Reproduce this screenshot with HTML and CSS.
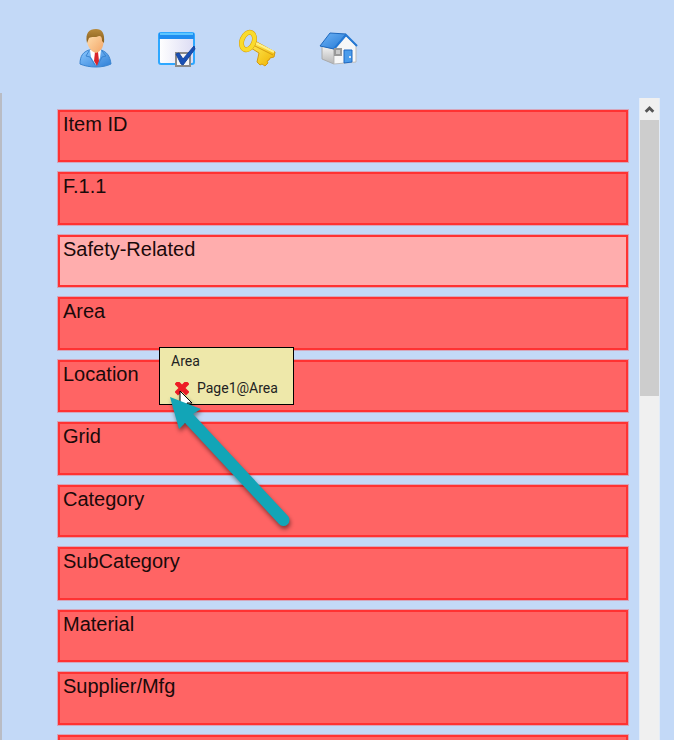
FILE: index.html
```html
<!DOCTYPE html>
<html lang="en">
<head>
    <meta charset="UTF-8">
    <meta name="viewport" content="width=device-width, initial-scale=1.0">
    <title>Fields</title>
    <link rel="stylesheet" href="styles.css">
</head>
<body>
    <header class="toolbar">
        <button type="button" aria-label="User">
            <svg viewBox="0 0 40 40">
                <defs>
                    <linearGradient id="suit" x2="1" y2="1"><stop stop-color="#8cc8ff"/><stop offset="1" stop-color="#2f7fd6"/></linearGradient>
                    <linearGradient id="skin" x2="1" y2="1"><stop stop-color="#ffe0b0"/><stop offset="1" stop-color="#f3a566"/></linearGradient>
                    <linearGradient id="hair" x2="0" y2="1"><stop stop-color="#b88a3c"/><stop offset="1" stop-color="#855c1c"/></linearGradient>
                </defs>
                <path d="M4 36c0-8 3-12 9-14h12c6 2 9 6 10 14-8 4-22 4-31 0z" fill="url(#suit)" stroke="#3a84d0"/>
                <path d="M14 22h11l-1 8-4 7-5-8z" fill="#fff"/>
                <path d="M19 24h3l1 9-2 5-3-5z" fill="#d9252b"/>
                <path d="M13 23l-3 5 4 1 5 8M26 23l4 5-4 1-4 8" fill="none" stroke="#3a84d0"/>
                <path d="M11 10c0-6 16-6 16 1 2 6-2 13-7 14-5-1-10-8-9-15z" fill="url(#skin)"/>
                <path d="M11 15C9 5 13 1 20 1c6 0 9 4 8 14l-2-2c0-4-1-5-3-5-4 2-7 0-10 2z" fill="url(#hair)"/>
            </svg>
        </button>
        <button type="button" aria-label="Tasks">
            <svg viewBox="0 0 40 40">
                <defs>
                    <linearGradient id="page" x2="1" y2="0"><stop stop-color="#fff"/><stop offset="1" stop-color="#dcdcf4"/></linearGradient>
                </defs>
                <rect x="2" y="5" width="35" height="31" rx="2" fill="url(#page)" stroke="#2ea8ff" stroke-width="2"/>
                <path d="M2 5h35v6H2z" fill="#1f8df0"/>
                <path d="M3 6h33" stroke="#5cc6ff" stroke-width="2"/>
                <rect x="19" y="25" width="14" height="13" fill="#f6f6f6" stroke="#8a8a8a" stroke-width="2"/>
                <path d="M19 26l3-1 4 6 11-13 1 3-12 16-2-1z" fill="#1950b4" stroke="#1646a0"/>
            </svg>
        </button>
        <button type="button" aria-label="Key">
            <svg viewBox="0 0 40 40">
                <defs>
                    <linearGradient id="gold" x2="1" y2="1"><stop stop-color="#ffee58"/><stop offset="1" stop-color="#efb000"/></linearGradient>
                </defs>
                <path d="M17 13l20 11-1 5-4 1-1 2-2 1 1 2-3 3-3-2-2 1-3-3 2-9-8-5z" fill="url(#gold)" stroke="#d39a10"/>
                <path d="M17 18l18 9" stroke="#d39a10"/>
                <path d="M18 15l18 9" stroke="#fff08a" stroke-width="2"/>
                <ellipse cx="10" cy="13" rx="6" ry="9" transform="rotate(22 10 13)" fill="none" stroke="#d39a10" stroke-width="5"/>
                <ellipse cx="10" cy="13" rx="6" ry="9" transform="rotate(22 10 13)" fill="none" stroke="#fadb2c" stroke-width="4"/>
            </svg>
        </button>
        <button type="button" aria-label="Home">
            <svg viewBox="0 0 40 40">
                <defs>
                    <linearGradient id="roof" x2="1" y2="1"><stop stop-color="#6fb4f6"/><stop offset="1" stop-color="#2478d4"/></linearGradient>
                    <linearGradient id="side" x2="0" y2="1"><stop stop-color="#f4f4f4"/><stop offset="1" stop-color="#b5b5b5"/></linearGradient>
                </defs>
                <path d="M3 18l12 3v15L3 31z" fill="url(#side)" stroke="#aaa"/>
                <path d="M15 20L27 8l10 10v16l-22 2z" fill="#f7f7f7" stroke="#bbb"/>
                <path d="M1 18L11 5l16 1-12 15z" fill="url(#roof)" stroke="#1e68bd"/>
                <path d="M15 21L27 7l11 11" fill="none" stroke="#2478d4" stroke-width="2"/>
                <rect x="16" y="21" width="6" height="6" fill="#c9c9c9" stroke="#999" stroke-width="2"/>
                <path d="M25 22h8v12l-8 1z" fill="#4a9cec" stroke="#1c67c0"/>
                <circle cx="31" cy="29" r="1" fill="#fff"/>
            </svg>
        </button>
    </header>
    <main>
        <ul class="fields">
            <li>Item ID</li>
            <li>F.1.1</li>
            <li class="light">Safety-Related</li>
            <li>Area</li>
            <li class="current">
                Location
                <div class="tooltip">
                    <p>Area</p>
                    <p class="error">
                        <svg viewBox="0 0 14 14"><path d="M3 2l8 8M11 2l-8 8" stroke="#ee1c25" stroke-width="5" stroke-linecap="square"/></svg>
                        Page1@Area
                    </p>
                </div>
                <svg class="pointer" viewBox="0 0 140 150">
                    <path d="M15 1v15l3-3 3 5h2l-1-5h5z" fill="#fff" stroke="#000"/>
                    <path d="M5 7l31 12-8 5 95 102a6 6 0 0 1-9 8L20 33l-6 6z" fill="#12a5b7"/>
                </svg>
            </li>
            <li>Grid</li>
            <li>Category</li>
            <li>SubCategory</li>
            <li>Material</li>
            <li>Supplier/Mfg</li>
            <li></li>
        </ul>
        <div class="scrollbar">
            <button type="button" aria-label="Scroll up">
                <svg viewBox="0 0 20 22"><path d="M6 14l4-4 4 4" fill="none" stroke="#555" stroke-width="3"/></svg>
            </button>
            <div class="thumb"></div>
        </div>
    </main>
</body>
</html>
```
FILE: styles.css
```css
* {
    margin: 0;
    padding: 0;
    box-sizing: border-box;
}
body {
    height: 100vh;
    display: flex;
    flex-direction: column;
    background-color: #C3D9F7;
    color: #1A0A0A;
    font-family: "Liberation Sans", Arial, sans-serif;
    font-size: 20px;
    line-height: 24px;
}
button {
    border: none;
    background: none;
    cursor: pointer;
}
svg {
    display: block;
}
.toolbar {
    display: flex;
    gap: 41px;
    padding: 28px 76px 25px;
}
.toolbar svg {
    width: 40px;
    height: 40px;
}
main {
    flex: 1;
    min-height: 0;
    display: flex;
    gap: 10px;
    padding: 5px 14px 0 55px;
    border-left: 2px solid #B9BCC4;
    overflow: hidden;
}
.fields {
    flex: 1;
    display: grid;
    grid-auto-rows: 52px 53px;
    gap: 10px;
    padding: 12px 1px 0;
    list-style: none;
    overflow: hidden;
}
.fields li {
    padding: 0 3px;
    background-color: #FF6464;
    border: 2px solid #FF3232;
    box-shadow: 0 0 0 1px rgba(255, 50, 50, .3);
}
.fields .light {
    background-color: #FFADAD;
}
.fields .current {
    position: relative;
    z-index: 1;
}
.tooltip {
    position: absolute;
    top: -15px;
    left: 99px;
    padding: 0 15px 2px 11px;
    background-color: #EEE8AA;
    border: 1px solid #000000;
    color: #222222;
    font-family: Roboto, sans-serif;
    font-size: 14px;
    line-height: 27px;
}
.tooltip .error {
    display: flex;
    align-items: center;
    gap: 8px;
    padding-left: 4px;
}
.error svg {
    width: 14px;
    height: 14px;
}
.pointer {
    position: absolute;
    top: 28px;
    left: 105px;
    width: 140px;
    height: 150px;
    filter: drop-shadow(1px 3px 2px rgba(0, 0, 0, .45));
}
.scrollbar {
    width: 21px;
    background-color: #F0F0F0;
    border: solid #E3ECF8;
    border-width: 0 1px;
}
.scrollbar button {
    display: block;
    width: 100%;
    height: 22px;
}
.scrollbar svg {
    width: 100%;
    height: 22px;
}
.thumb {
    height: 276px;
    background-color: #CDCDCD;
}
```
